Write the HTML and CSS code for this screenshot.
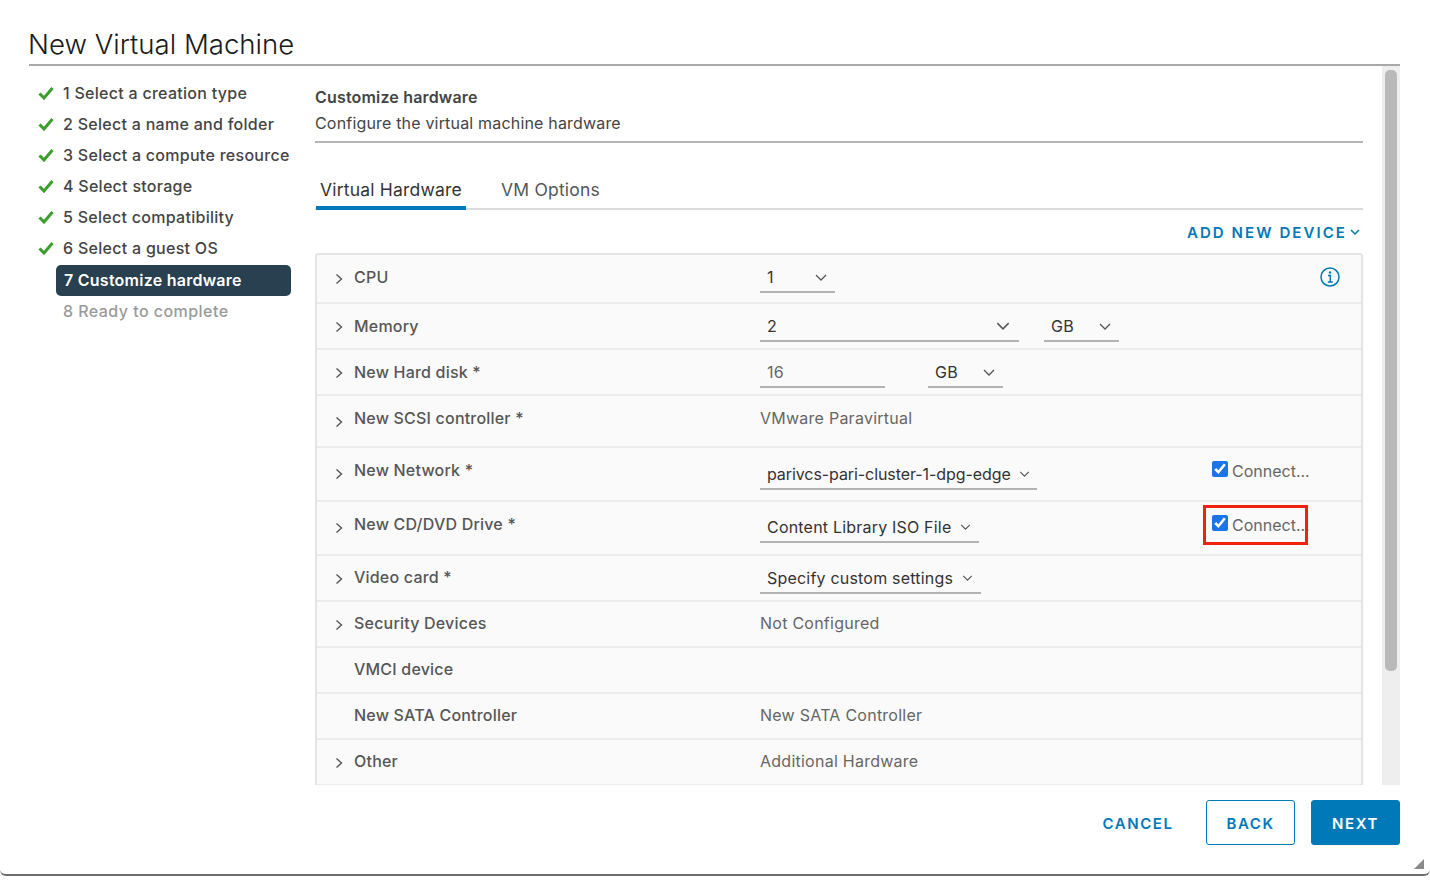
FILE: index.html
```html
<!DOCTYPE html>
<html lang="en">
<head>
<meta charset="utf-8">
<title>New Virtual Machine</title>
<link rel="stylesheet" href="styles.css">
</head>
<body>
<div class="dialog">
  <h1 class="title">New Virtual Machine</h1>
  <div class="main">
    <nav class="steps">
      <div class="step"><svg class="tick" viewBox="0 0 16 14"><path d="M1.5 7.5 6 12 14.5 2"/></svg>1 Select a creation type</div>
      <div class="step"><svg class="tick" viewBox="0 0 16 14"><path d="M1.5 7.5 6 12 14.5 2"/></svg>2 Select a name and folder</div>
      <div class="step"><svg class="tick" viewBox="0 0 16 14"><path d="M1.5 7.5 6 12 14.5 2"/></svg>3 Select a compute resource</div>
      <div class="step"><svg class="tick" viewBox="0 0 16 14"><path d="M1.5 7.5 6 12 14.5 2"/></svg>4 Select storage</div>
      <div class="step"><svg class="tick" viewBox="0 0 16 14"><path d="M1.5 7.5 6 12 14.5 2"/></svg>5 Select compatibility</div>
      <div class="step"><svg class="tick" viewBox="0 0 16 14"><path d="M1.5 7.5 6 12 14.5 2"/></svg>6 Select a guest OS</div>
      <div class="step active">7 Customize hardware</div>
      <div class="step todo">8 Ready to complete</div>
    </nav>
    <section class="content">
      <header class="page-head">
        <div class="page-title">Customize hardware</div>
        <div class="page-sub">Configure the virtual machine hardware</div>
      </header>
      <div class="tabs">
        <div class="tab on">Virtual Hardware</div>
        <div class="tab">VM Options</div>
      </div>
      <div class="add-row"><span class="add">ADD NEW DEVICE</span><svg class="add-caret" viewBox="0 0 10 6"><path d="M1 1l4 4 4-4"/></svg></div>
      <div class="table">
        <div class="row h49">
          <svg class="exp" viewBox="0 0 8 12"><path d="M1.5 1.5 6.5 6l-5 4.5"/></svg>
          <div class="label">CPU</div>
          <div class="vals"><span class="sel w75">1<svg class="car" viewBox="0 0 12 7"><path d="M1 1l5 5 5-5"/></svg></span></div>
          <svg class="info" viewBox="0 0 20 20"><circle cx="10" cy="10" r="9"/><path d="M8 8.5h2.3V15M7.8 15h5"/><circle class="dot" cx="10" cy="5.5" r="1.2"/></svg>
        </div>
        <div class="row nudge">
          <svg class="exp" viewBox="0 0 8 12"><path d="M1.5 1.5 6.5 6l-5 4.5"/></svg>
          <div class="label">Memory</div>
          <div class="vals"><span class="sel w259">2<svg class="car big" viewBox="0 0 12 7"><path d="M1 1l5 5 5-5"/></svg></span><span class="sel w75">GB<svg class="car" viewBox="0 0 12 7"><path d="M1 1l5 5 5-5"/></svg></span></div>
        </div>
        <div class="row nudge">
          <svg class="exp" viewBox="0 0 8 12"><path d="M1.5 1.5 6.5 6l-5 4.5"/></svg>
          <div class="label">New Hard disk *</div>
          <div class="vals gap43"><span class="sel w125 dim">16</span><span class="sel w75">GB<svg class="car" viewBox="0 0 12 7"><path d="M1 1l5 5 5-5"/></svg></span></div>
        </div>
        <div class="row h52 nudge">
          <svg class="exp low" viewBox="0 0 8 12"><path d="M1.5 1.5 6.5 6l-5 4.5"/></svg>
          <div class="label">New SCSI controller *</div>
          <div class="plain">VMware Paravirtual</div>
        </div>
        <div class="row h54 nudge">
          <svg class="exp low" viewBox="0 0 8 12"><path d="M1.5 1.5 6.5 6l-5 4.5"/></svg>
          <div class="label">New Network *</div>
          <div class="vals low net"><span class="sel auto tight">parivcs-pari-cluster-1-dpg-edge<svg class="car small" viewBox="0 0 12 7"><path d="M1 1l5 5 5-5"/></svg></span></div>
          <label class="connect"><input type="checkbox" checked>Connect...</label>
        </div>
        <div class="row h54 nudge">
          <svg class="exp low" viewBox="0 0 8 12"><path d="M1.5 1.5 6.5 6l-5 4.5"/></svg>
          <div class="label">New CD/DVD Drive *</div>
          <div class="vals low"><span class="sel auto">Content Library ISO File<svg class="car small" viewBox="0 0 12 7"><path d="M1 1l5 5 5-5"/></svg></span></div>
          <label class="connect"><input type="checkbox" checked>Connect...<span class="mark"></span></label>
        </div>
        <div class="row">
          <svg class="exp" viewBox="0 0 8 12"><path d="M1.5 1.5 6.5 6l-5 4.5"/></svg>
          <div class="label">Video card *</div>
          <div class="vals"><span class="sel auto">Specify custom settings<svg class="car small" viewBox="0 0 12 7"><path d="M1 1l5 5 5-5"/></svg></span></div>
        </div>
        <div class="row">
          <svg class="exp" viewBox="0 0 8 12"><path d="M1.5 1.5 6.5 6l-5 4.5"/></svg>
          <div class="label">Security Devices</div>
          <div class="plain">Not Configured</div>
        </div>
        <div class="row">
          <span class="exp"></span>
          <div class="label">VMCI device</div>
        </div>
        <div class="row">
          <span class="exp"></span>
          <div class="label">New SATA Controller</div>
          <div class="plain">New SATA Controller</div>
        </div>
        <div class="row">
          <svg class="exp" viewBox="0 0 8 12"><path d="M1.5 1.5 6.5 6l-5 4.5"/></svg>
          <div class="label">Other</div>
          <div class="plain">Additional Hardware</div>
        </div>
      </div>
    </section>
    <div class="scroll"><div class="thumb"></div></div>
  </div>
  <footer class="foot">
    <button class="btn link">CANCEL</button>
    <button class="btn outline">BACK</button>
    <button class="btn solid">NEXT</button>
  </footer>
  <svg class="grip" viewBox="0 0 10 10"><path d="M10 0v10H0z"/></svg>
</div>
</body>
</html>
```
FILE: styles.css
```css
* { box-sizing: border-box; }
html, body { margin: 0; height: 100%; background: #fff; }
body { font-family: Inter, "Open Sans", "Liberation Sans", sans-serif; color: #565656; overflow: hidden; }
.dialog {
  position: relative;
  width: 1430px;
  height: 876px;
  background: #fff;
  padding: 0 30px 0 29px;
  border-bottom: 2px solid #6d6d6d;
  border-radius: 0 0 6px 6px;
  display: flex;
  flex-direction: column;
}
.title {
  margin: 0;
  height: 66px;
  padding-top: 26px;
  font-size: 27.6px;
  line-height: 36px;
  font-weight: 300;
  text-indent: -1px;
  color: #1a1a1a;
  border-bottom: 2px solid #a9a9a9;
}
.main { display: flex; height: 719px; overflow: hidden; }
.steps { width: 286px; flex: none; padding-top: 13px; }
.step {
  position: relative;
  height: 31px;
  line-height: 29px;
  margin-left: 27px;
  width: 235px;
  padding-left: 7px;
  font-size: 16px;
  letter-spacing: .28px;
  font-weight: 500;
  color: #444;
  white-space: nowrap;
}
.tick { position: absolute; left: -18px; top: 7px; width: 16px; height: 14px; fill: none; stroke: #3c9e2c; stroke-width: 3; }
.step.active { background: #28404f; color: #fff; border-radius: 5px; font-weight: 600; line-height: 31px; padding-left: 8px; letter-spacing: .25px; }
.step.todo { color: #9a9a9a; line-height: 31px; letter-spacing: .45px; }
.content { width: 1048px; flex: none; }
.page-head { height: 77px; padding-top: 20px; border-bottom: 2px solid #b5b5b5; }
.page-title { font-size: 16px; letter-spacing: .17px; line-height: 22px; font-weight: 600; color: #444; }
.page-sub { font-size: 16px; letter-spacing: .18px; line-height: 26px; color: #444; margin-top: 2px; }
.tabs { display: flex; height: 67px; padding-top: 31px; border-bottom: 2px solid #dcdcdc; }
.tab { height: 36px; padding: 0 4px; line-height: 32px; font-size: 17.5px; letter-spacing: .2px; color: #565656; margin-right: 31px; }
.tab.on { margin-left: 1px; width: 150px; color: #333; border-bottom: 4px solid #0079b8; }
.add-row { height: 43px; display: flex; justify-content: flex-end; align-items: center; padding: 2px 3px 0 0; }
.add { font-size: 15px; font-weight: 600; letter-spacing: 2.07px; color: #0079b8; }
.add-caret { width: 10px; height: 6px; margin: -2px 0 0 3px; fill: none; stroke: #0079b8; stroke-width: 1.5; }
.table { width: 1048px; border: 2px solid #e4e4e4; border-bottom: 0; border-radius: 3px 3px 0 0; background: #fafafa; }
.row {
  position: relative;
  height: 46px;
  display: flex;
  align-items: flex-start;
  border-bottom: 2px solid #ececec;
  padding-top: 11px;
}
.h49 { height: 49px; padding-top: 12px; }
.h52 { height: 52px; }
.h54 { height: 54px; }
.nudge { padding-top: 12px; }
.exp { flex: none; width: 8px; height: 12px; margin: 6px 0 0 18px; fill: none; stroke: #555; stroke-width: 1.4; }
.exp.low { margin-top: 9px; }
.nudge .exp { margin-top: 5px; }
.nudge .exp.low { margin-top: 8px; }
.label { width: 406px; margin: -1px 0 0 11px; flex: none; font-size: 16px; letter-spacing: .2px; line-height: 22px; font-weight: 500; color: #565656; white-space: nowrap; }
.plain { margin-top: -1px; font-size: 16px; letter-spacing: .25px; line-height: 22px; color: #666; }
.vals { display: flex; gap: 25px; margin-top: -3px; }
.vals.low { margin-top: 0; }
.nudge .vals { margin-top: -4px; }
.nudge .vals.low { margin-top: -1px; }
.nudge .vals.net { margin-top: 0; }
.h49 .vals { margin-top: -4px; }
.gap43 { gap: 43px; }
.sel {
  position: relative;
  display: flex;
  align-items: center;
  height: 30px;
  padding: 0 8px 0 7px;
  font-size: 16px;
  letter-spacing: .2px;
  color: #333;
  border-bottom: 2px solid #b3b3b3;
  white-space: nowrap;
}
.sel.dim { color: #666; }
.sel.tight { letter-spacing: -.08px; padding-right: 7px; margin-right: 0; }
.tight .car.small { margin-left: 8px; }
.w75 { width: 75px; }
.w125 { width: 125px; }
.w259 { width: 259px; }
.car { margin-left: auto; width: 12px; height: 7px; fill: none; stroke: #555; stroke-width: 1.3; }
.car.big { width: 14px; height: 8px; margin-right: 1px; }
.car.small { width: 11px; height: 6px; margin-left: 9px; }
.sel.auto { width: auto; }
.info { position: absolute; right: 21px; top: 12px; width: 20px; height: 20px; fill: none; stroke: #0079b8; stroke-width: 1.5; }
.info .dot { fill: #0079b8; stroke: none; }
.connect { position: absolute; left: 895px; top: 12px; display: flex; align-items: flex-start; font-size: 16px; line-height: 22px; color: #666; white-space: nowrap; }
.connect input { appearance: auto; accent-color: #1b74e8; width: 16px; height: 16px; margin: 1px 4px 0 0; }
.mark { position: absolute; left: -9px; top: -9px; width: 105px; height: 40px; border: 3px solid #f0220c; }
.scroll { width: 18px; margin-left: 19px; background: #eee; padding: 4px 3px 0; flex: none; }
.thumb { height: 601px; background: #b9b9b9; border-radius: 5px; }
.foot { height: 89px; display: flex; justify-content: flex-end; align-items: flex-start; padding-top: 15px; gap: 16px; }
.btn { height: 45px; width: 89px; padding-top: 2px; border-radius: 3px; font: 600 15px Inter, "Liberation Sans", sans-serif; letter-spacing: 1.6px; color: #0079b8; background: #fff; border: 1px solid #0079b8; }
.btn.link { border: 0; margin-right: 7px; width: 90px; }
.btn.solid { background: #0079b8; color: #fff; }
.grip { position: absolute; right: 6px; bottom: 5px; width: 10px; height: 10px; fill: #8a8a8a; }
```
